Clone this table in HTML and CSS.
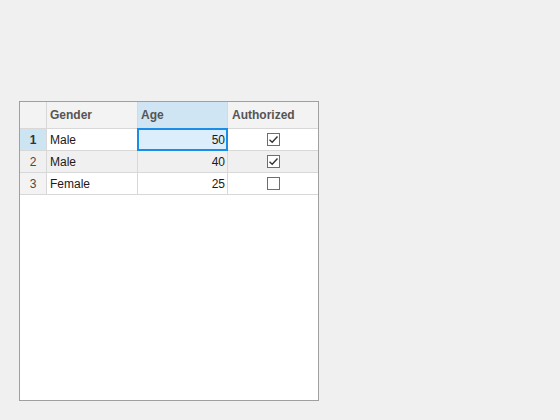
FILE: index.html
```html
<!DOCTYPE html>
<html>
<head>
<meta charset="utf-8">
<link rel="stylesheet" href="styles.css">
</head>
<body>
<div class="table">
  <div class="row head">
    <div class="cell rh"></div>
    <div class="cell c1">Gender</div>
    <div class="cell c2 selcol">Age</div>
    <div class="cell c3">Authorized</div>
  </div>
  <div class="row">
    <div class="cell rh selrow">1</div>
    <div class="cell c1">Male</div>
    <div class="cell c2 num selected">50</div>
    <div class="cell c3 chk"><span class="box checked"><svg viewBox="0 0 13 13" width="13" height="13"><path d="M2.5 6.8 L5.2 9.3 L10.5 3.6" fill="none" stroke="#333" stroke-width="1.4"/></svg></span></div>
  </div>
  <div class="row alt">
    <div class="cell rh">2</div>
    <div class="cell c1">Male</div>
    <div class="cell c2 num">40</div>
    <div class="cell c3 chk"><span class="box checked"><svg viewBox="0 0 13 13" width="13" height="13"><path d="M2.5 6.8 L5.2 9.3 L10.5 3.6" fill="none" stroke="#333" stroke-width="1.4"/></svg></span></div>
  </div>
  <div class="row">
    <div class="cell rh">3</div>
    <div class="cell c1">Female</div>
    <div class="cell c2 num">25</div>
    <div class="cell c3 chk"><span class="box"></span></div>
  </div>
</div>
</body>
</html>
```
FILE: styles.css
```css
html, body {
  margin: 0;
  padding: 0;
  background: #f0f0f0;
}
body {
  padding: 101px 0 0 19px;
  font-family: "Liberation Sans", Arial, sans-serif;
  font-size: 12px;
  color: #1a1a1a;
}
.table {
  width: 298px;
  height: 298px;
  border: 1px solid #a0a0a0;
  background: #fff;
}
.row {
  display: flex;
  height: 21px;
  border-bottom: 1px solid #d8d8d8;
}
.row.head {
  height: 26px;
  background: #f3f3f3;
  color: #555;
  font-weight: bold;
}
.row.alt {
  background: #f0f0f0;
}
.cell {
  box-sizing: border-box;
  border-right: 1px solid #d8d8d8;
  padding: 0 3px;
  display: flex;
  align-items: center;
  white-space: nowrap;
  position: relative;
}
.rh {
  width: 27px;
  justify-content: center;
  background: #f3f3f3;
  color: #4a4a4a;
  padding: 0;
}
.row.alt .rh { background: #f0f0f0; }
.rh.selrow {
  background: #cde4f3;
  font-weight: bold;
  color: #333;
}
.c1 { width: 91px; }
.c2 { width: 90px; }
.c3 { width: 90px; border-right: none; padding-left: 4px; }
.selcol { background: #cfe5f3; }
.num { justify-content: flex-end; padding-right: 2px; }
.selected { background: #dcedfb; }
.selected::after {
  content: "";
  position: absolute;
  left: -1px;
  top: -1px;
  right: -1px;
  bottom: -1px;
  border: 2px solid #1a8ee6;
}
.chk { justify-content: center; }
.box {
  width: 13px;
  height: 13px;
  box-sizing: border-box;
  border: 1px solid #6e6e6e;
  background: #fff;
  display: flex;
  align-items: center;
  justify-content: center;
  position: relative;
}
.box svg {
  position: absolute;
  left: -1px;
  top: -1px;
}
```
